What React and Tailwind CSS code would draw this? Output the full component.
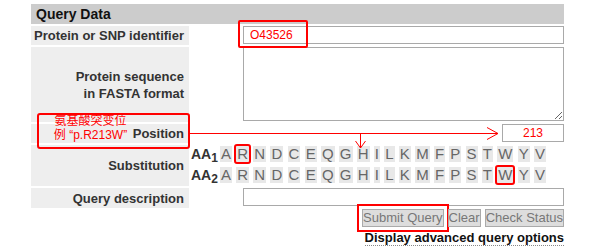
import React from "react";

const AA = ["A", "R", "N", "D", "C", "E", "Q", "G", "H", "I", "L", "K", "M", "F", "P", "S", "T", "W", "Y", "V"];

function Row({ label, h, children, right = "justify-end" }) {
  return (
    <div className={`flex gap-[2px] ${h}`}>
      <div className="w-[158px] shrink-0 bg-[#eeeeee] flex items-center justify-end pr-[5px] text-right text-[13px] leading-[17px] font-bold text-[#333]">
        {label}
      </div>
      <div className={`flex-1 flex ${right}`}>{children}</div>
    </div>
  );
}

function Letters({ mark }) {
  return (
    <div className="flex gap-[4.25px]">
      {AA.map((a) => (
        <span
          key={a}
          className={`px-[1px] h-[16px] leading-[16px] text-[15px] bg-[#e8e8e8] text-[#666] ${
            a === mark ? "outline-2 outline-[#ff0000] rounded-[1px]" : ""
          }`}
        >
          {a}
        </span>
      ))}
    </div>
  );
}

export default function App() {
  return (
    <div className="relative w-[600px] h-[250px] overflow-hidden bg-white pt-[4px] pl-[31px] font-['Liberation_Sans',Arial,sans-serif]">
      <div className="w-[533px] flex flex-col gap-[2px]">
        <div className="h-[20px] bg-[#cccccc] pl-[5px] text-[14px] leading-[20px] font-bold text-[#111]">
          Query Data
        </div>
        <Row label="Protein or SNP identifier" h="h-[19px]">
          <input
            defaultValue="O43526"
            className="w-[321px] h-[18px] border border-[#a9a9a9] pl-[6px] text-[12px] text-[#ff0000] outline-none"
          />
        </Row>
        <Row
          label={
            <span>
              Protein sequence
              <br />
              in FASTA format
            </span>
          }
          h="h-[75px]"
        >
          <textarea className="w-[321px] h-[74px] border border-[#a9a9a9] outline-none" />
        </Row>
        <Row label="Position" h="h-[19px]">
          <input
            defaultValue="213"
            className="w-[62px] h-[18px] border border-[#a9a9a9] text-center text-[12px] text-[#ff0000] outline-none"
          />
        </Row>
        <Row label="Substitution" h="h-[41px]" right="justify-start">
          <div className="flex flex-col gap-[5px] pt-[1px]">
            <div className="flex items-center gap-[2px]">
              <span className="w-[27px] text-[14px] leading-[16px] font-bold text-[#333]">
                AA<sub className="text-[12px]">1</sub>
              </span>
              <Letters mark="R" />
            </div>
            <div className="flex items-center gap-[2px]">
              <span className="w-[27px] text-[14px] leading-[16px] font-bold text-[#333]">
                AA<sub className="text-[12px]">2</sub>
              </span>
              <Letters mark="W" />
            </div>
          </div>
        </Row>
        <Row label="Query description" h="h-[20px]">
          <input className="w-[321px] h-[18px] border border-[#a9a9a9] outline-none" />
        </Row>
      </div>

      <div className="w-[533px] mt-[1px] flex justify-end gap-[4px]">
        <button className="h-[18px] px-0 bg-[#dddddd] border border-[#aaaaaa] text-[13px] leading-[16px] text-[#777] outline-2 outline-offset-[3px] outline-[#ff0000]">
          Submit Query
        </button>
        <button className="h-[18px] px-0 bg-[#dddddd] border border-[#aaaaaa] text-[13px] leading-[16px] text-[#777]">
          Clear
        </button>
        <button className="h-[18px] px-0 bg-[#dddddd] border border-[#aaaaaa] text-[13px] leading-[16px] text-[#777]">
          Check Status
        </button>
      </div>
      <div className="w-[533px] mt-[3px] flex justify-end">
        <span className="text-[13px] leading-[15px] font-bold text-[#111] border-b border-dotted border-[#888]">
          Display advanced query options
        </span>
      </div>

      {/* annotations */}
      <div className="absolute left-[238px] top-[20px] w-[70px] h-[28px] border-2 border-[#ff0000] rounded-[2px] pointer-events-none" />
      <div className="absolute left-[37px] top-[113px] w-[153px] h-[36px] border-2 border-[#ff0000] rounded-[3px] pointer-events-none" />
      <div className="absolute left-[40px] top-[115px] w-[101px] text-center text-[12px] leading-[13.5px] text-[#ff0000] font-['Liberation_Sans','Noto_Sans_CJK_SC',sans-serif]">
        <div>氨基酸突变位</div>
        <div>例 “p.R213W”</div>
      </div>
      <svg className="absolute left-0 top-0 pointer-events-none" width="600" height="250">
        <g stroke="#ff0000" strokeWidth="1" fill="none">
          <line x1="190" y1="133.5" x2="498" y2="133.5" />
          <polyline points="487,127.5 498,133.5 487,139.5" />
          <line x1="360.5" y1="133" x2="360.5" y2="148" />
          <polyline points="355.5,141 360.5,148 365.5,141" />
        </g>
      </svg>
    </div>
  );
}
